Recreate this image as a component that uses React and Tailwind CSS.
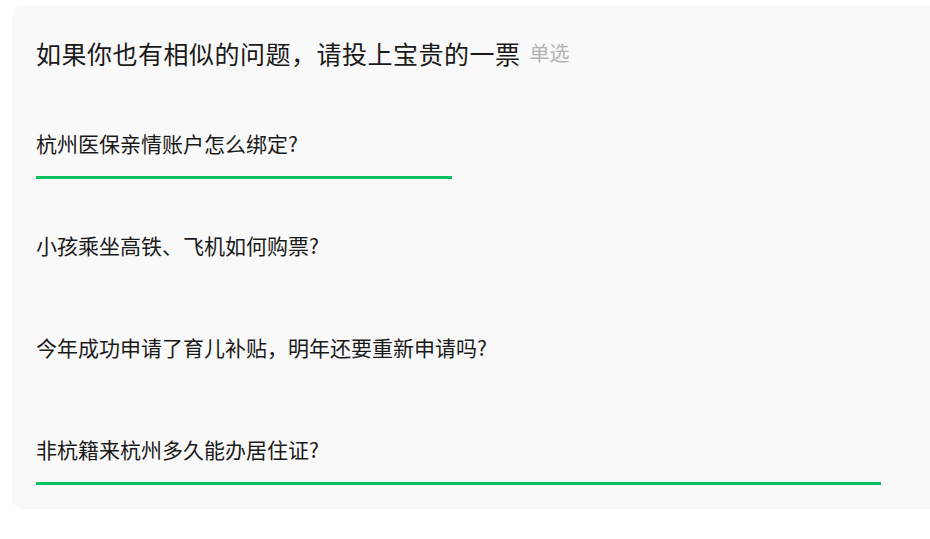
export default function App() {
  const items = [
    { q: "杭州医保亲情账户怎么绑定?", w: 416 },
    { q: "小孩乘坐高铁、飞机如何购票?", w: 0 },
    { q: "今年成功申请了育儿补贴，明年还要重新申请吗?", w: 0 },
    { q: "非杭籍来杭州多久能办居住证?", w: 845 },
  ];
  return (
    <div
      className="w-[930px] h-[539px] overflow-hidden bg-white pt-[5px] pl-[12px]"
      style={{ fontFamily: '"Noto Sans CJK SC", "Noto Sans", sans-serif' }}
    >
      <div className="w-[940px] rounded-[10px] bg-[#f9f9f9] pl-[24px] pr-[24px] pt-[32px] pb-[24px]">
        <div className="flex items-center h-[32px]">
          <span className="text-[25px] leading-[32px] tracking-[0.5px] text-[#1a1a1a]">
            如果你也有相似的问题，请投上宝贵的一票
          </span>
          <span className="ml-[9px] text-[20px] leading-[32px] text-[#b2b2b2]">单选</span>
        </div>
        <div className="mt-[60px] flex flex-col gap-[52px]">
          {items.map((it, i) => (
            <div key={i} className="flex flex-col">
              <div className="text-[21px] leading-[28px] text-[#1a1a1a]">{it.q}</div>
              <div className="mt-[19px] h-[3px]">
                <div className="h-[3px] bg-[#07c160]" style={{ width: it.w }} />
              </div>
            </div>
          ))}
        </div>
      </div>
    </div>
  );
}
